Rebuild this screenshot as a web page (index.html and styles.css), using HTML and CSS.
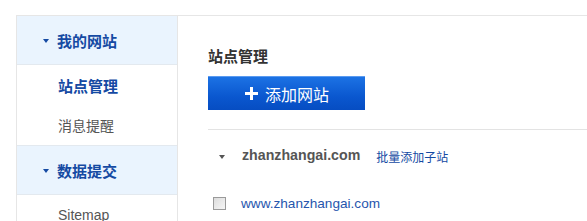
FILE: index.html
```html
<!DOCTYPE html>
<html lang="zh">
<head>
<meta charset="utf-8">
<title>站点管理</title>
<link rel="stylesheet" href="styles.css">
</head>
<body>
<div class="wrap">
  <aside class="sidebar">
    <div class="nav-head first"><span class="tri"></span>我的网站</div>
    <div class="nav-item active">站点管理</div>
    <div class="nav-item">消息提醒</div>
    <div class="nav-head"><span class="tri"></span>数据提交</div>
    <div class="nav-item">Sitemap</div>
  </aside>
  <main class="main">
    <h2 class="title">站点管理</h2>
    <button class="add-btn"><span class="plus"></span>添加网站</button>
    <div class="divider"></div>
    <div class="domain-row">
      <span class="tri gray"></span>
      <span class="domain">zhanzhangai.com</span>
      <a class="batch" href="#">批量添加子站</a>
    </div>
    <div class="site-row">
      <span class="checkbox"></span>
      <a class="site-link" href="#">www.zhanzhangai.com</a>
    </div>
  </main>
</div>
</body>
</html>
```
FILE: styles.css
```css
html, body {
  margin: 0;
  padding: 0;
  background: #fff;
  font-family: "Liberation Sans", "Noto Sans CJK SC", sans-serif;
  overflow: hidden;
}
.wrap {
  margin: 15px 0 0 16px;
  border-top: 1px solid #e6e6e6;
  display: flex;
  height: 205px;
  overflow: hidden;
}
.sidebar {
  width: 160px;
  flex: none;
  border-left: 1px solid #e6e6e6;
  border-right: 1px solid #e6e6e6;
}
.nav-head {
  height: 48px;
  box-sizing: content-box;
  background: #eaf4fe;
  border-top: 1px solid #e3e9ef;
  border-bottom: 1px solid #e3e9ef;
  display: flex;
  align-items: center;
  padding-left: 26px;
  font-size: 15px;
  font-weight: bold;
  color: #154aa3;
}
.nav-head.first {
  border-top: none;
}
.tri {
  width: 0;
  height: 0;
  border-left: 3.5px solid transparent;
  border-right: 3.5px solid transparent;
  border-top: 4px solid #154aa3;
  margin-right: 8px;
  margin-top: 1px;
}
.nav-item {
  height: 40px;
  display: flex;
  align-items: center;
  padding-left: 41px;
  font-size: 14px;
  color: #555;
}
.nav-item.active {
  font-size: 15px;
  font-weight: bold;
  color: #154aa3;
}
.main {
  flex: 1;
  padding-left: 30px;
}
.title {
  margin: 31px 0 0 0;
  font-size: 15px;
  line-height: 20px;
  font-weight: bold;
  color: #333;
}
.add-btn {
  margin-top: 9px;
  width: 157px;
  height: 34px;
  border: none;
  border-top: 1px solid #5a9af0;
  background: linear-gradient(#1c72e4, #0a57cf 60%, #064dc2);
  color: #fff;
  font-family: "Liberation Sans", "Noto Sans CJK SC", sans-serif;
  font-size: 16px;
  display: flex;
  align-items: center;
  justify-content: center;
  gap: 7px;
  padding: 0 0 0 1px;
  cursor: pointer;
}
.plus {
  position: relative;
  width: 13px;
  height: 13px;
  display: inline-block;
}
.plus::before, .plus::after {
  content: "";
  position: absolute;
  background: #fff;
}
.plus::before {
  left: 0;
  top: 5px;
  width: 13px;
  height: 3px;
}
.plus::after {
  left: 5px;
  top: 0;
  width: 3px;
  height: 13px;
}
.divider {
  margin-top: 19px;
  height: 1px;
  background: #e3e3e3;
}
.domain-row {
  height: 50px;
  display: flex;
  align-items: center;
}
.tri.gray {
  border-top-color: #555;
  margin: 4px 0 0 11px;
}
.domain {
  margin-left: 17px;
  font-size: 14.2px;
  font-weight: bold;
  color: #555;
}
.batch {
  margin-left: 16px;
  font-size: 12px;
  color: #154aa3;
  text-decoration: none;
  margin-top: 3px;
}
.site-row {
  height: 46px;
  display: flex;
  align-items: center;
}
.checkbox {
  margin-left: 5px;
  width: 11px;
  height: 11px;
  border: 1px solid #9a9a9a;
  background: linear-gradient(135deg, #dcdcdc, #f6f6f6);
  flex: none;
}
.site-link {
  margin-left: 15px;
  font-size: 13.6px;
  color: #2656ad;
  text-decoration: none;
}
```
